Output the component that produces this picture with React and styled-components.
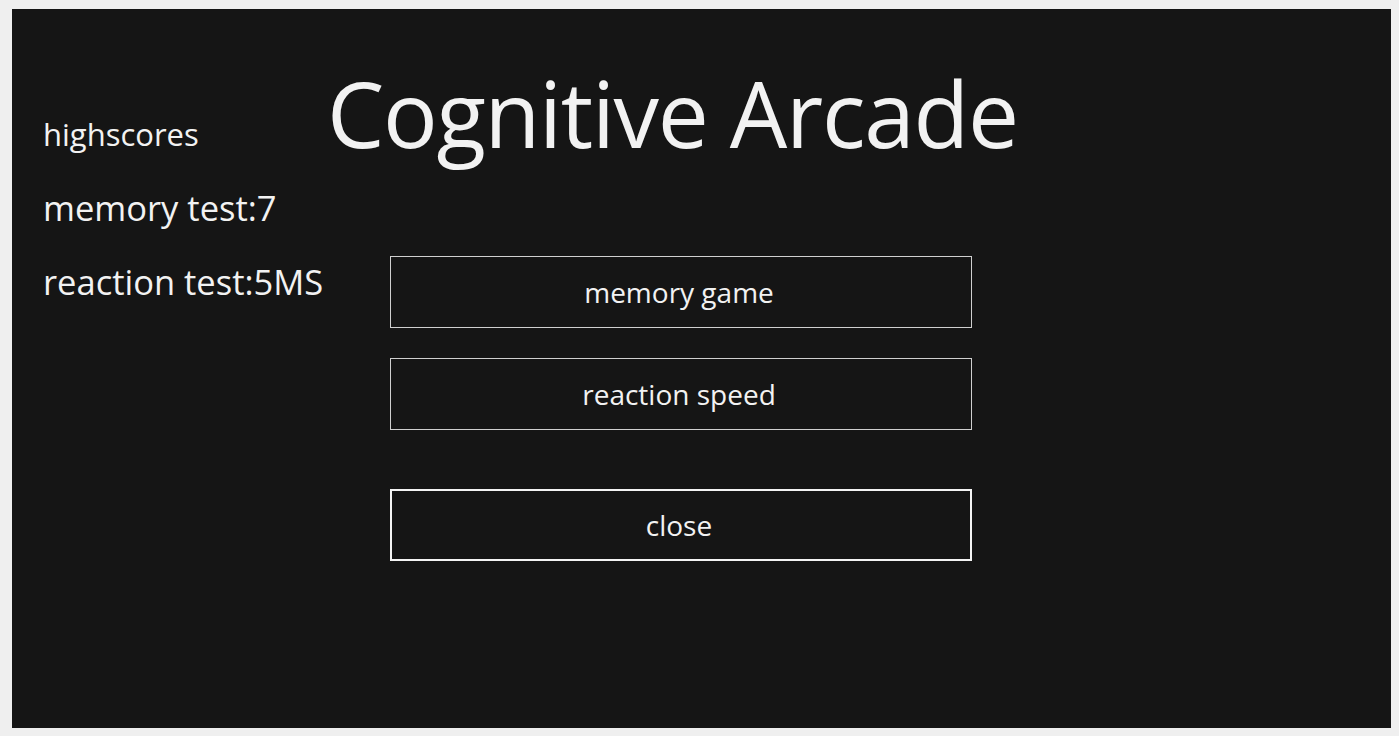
import React from "react";
import styled, { createGlobalStyle } from "styled-components";

const GlobalStyle = createGlobalStyle`
  html, body {
    margin: 0;
    padding: 0;
    background: #efefef;
  }
  body {
    font-family: "Open Sans", "Noto Sans", sans-serif;
  }
`;

const Frame = styled.div`
  width: 1399px;
  height: 736px;
  box-sizing: border-box;
  padding: 9px 8px 8px 12px;
  background: #efefef;
`;

const Panel = styled.div`
  height: 100%;
  display: flex;
  background: #151515;
  color: #f2f2f2;
`;

const Sidebar = styled.aside`
  width: 285px;
  padding: 101px 0 0 31px;
  display: flex;
  flex-direction: column;
  gap: 26px;
`;

const ScoreLine = styled.div`
  font-size: ${(p) => (p.$small ? "31px" : "34.5px")};
  line-height: 48px;
  white-space: nowrap;
`;

const Main = styled.main`
  flex: 1;
  display: flex;
  flex-direction: column;
  padding-top: 44px;
`;

const Title = styled.h1`
  margin: 0 0 0 -1px;
  font-size: 91px;
  font-weight: 400;
  line-height: 120px;
  letter-spacing: -1.3px;
`;

const Menu = styled.div`
  margin: 83px 0 0 62px;
  width: 582px;
  display: flex;
  flex-direction: column;
  gap: 30px;
`;

const MenuButton = styled.button`
  height: 72px;
  box-sizing: border-box;
  background: transparent;
  color: #f2f2f2;
  border: ${(p) => (p.$primary ? "2px solid #f4f4f4" : "1px solid #cfcfcf")};
  margin-top: ${(p) => (p.$primary ? "29px" : "0")};
  padding: 0 4px 0 0;
  font-family: inherit;
  font-size: 28px;
  cursor: pointer;
`;

export default function App() {
  return (
    <>
      <GlobalStyle />
      <Frame>
        <Panel>
          <Sidebar>
            <ScoreLine $small>highscores</ScoreLine>
            <ScoreLine>memory test:7</ScoreLine>
            <ScoreLine>reaction test:5MS</ScoreLine>
          </Sidebar>
          <Main>
            <Title>Cognitive Arcade</Title>
            <Menu>
              <MenuButton>memory game</MenuButton>
              <MenuButton>reaction speed</MenuButton>
              <MenuButton $primary>close</MenuButton>
            </Menu>
          </Main>
        </Panel>
      </Frame>
    </>
  );
}
